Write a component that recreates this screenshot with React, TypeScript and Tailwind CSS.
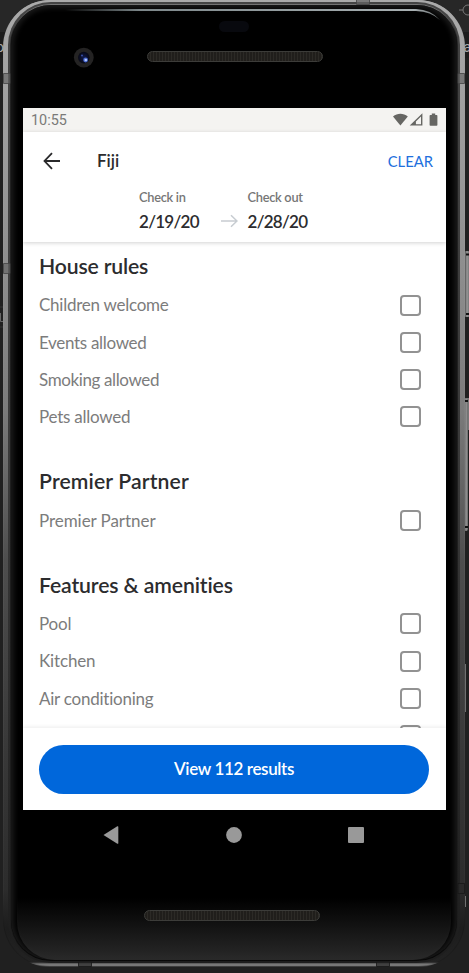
import React from "react";

const sections = [
  {
    title: "House rules",
    titleClass: "tracking-[-0.17px]",
    items: [
      ["Children welcome", "tracking-[-0.25px]"],
      ["Events allowed", "tracking-[-0.31px]"],
      ["Smoking allowed", "tracking-[-0.38px]"],
      ["Pets allowed", "tracking-[-0.24px]"],
    ],
  },
  {
    title: "Premier Partner",
    titleClass: "tracking-[0.13px]",
    items: [["Premier Partner", "tracking-[-0.06px]"]],
  },
  {
    title: "Features & amenities",
    titleClass: "tracking-[-0.12px]",
    items: [
      ["Pool", "tracking-[-0.2px]"],
      ["Kitchen", "tracking-[-0.15px]"],
      ["Air conditioning", "tracking-[-0.23px]"],
      ["", ""],
    ],
  },
];

function Speaker() {
  return (
    <div className="h-[11px] w-[176px] rounded-full border border-[#3c3c39] bg-[repeating-linear-gradient(90deg,#201e1b_0px,#201e1b_2px,#2c2a26_2px,#2c2a26_3px)]" />
  );
}

function StatusIcons() {
  return (
    <svg width="46" height="16" viewBox="0 0 46 16" fill="#666663">
      <path d="M0 4.4C4.4 1 10.4 1 14.8 4.4L7.4 13.4Z" />
      <path d="M16.7 13.5L29.4 1.2V13.5Z M22.9 12.2H28V4.6L22.9 9.5Z" fillRule="evenodd" />
      <path d="M38.8 1.6h3.4v1.3h1.4q.8 0 .8.8v9.2q0 .8-.8.8h-6.2q-.8 0-.8-.8V3.7q0-.8.8-.8h1.4z" />
    </svg>
  );
}

function StatusBar() {
  return (
    <div className="flex h-6 shrink-0 items-center justify-between bg-[#f4f3f1] pr-[7px] pl-2">
      <span className="pt-px font-[Roboto,sans-serif] text-[14.4px] text-[#7a7a78]">10:55</span>
      <StatusIcons />
    </div>
  );
}

function DateField({ label, value }: { label: string; value: string }) {
  return (
    <div className="w-[60px] whitespace-nowrap">
      <div className="h-[23px] text-[12.8px] leading-[18px] font-semibold tracking-[-0.27px] text-[#767676]">{label}</div>
      <div className="text-[17px] leading-[22px] font-semibold tracking-[-0.72px] text-[#2c2c2e]">{value}</div>
    </div>
  );
}

function Header() {
  return (
    <header className="relative z-10 h-[110px] shrink-0 bg-white shadow-[0_1px_4px_rgba(0,0,0,0.18)]">
      <div className="flex h-[56px] items-center pt-[2px] pr-[13px] pl-5">
        <svg width="17" height="18" viewBox="0 0 17 18" fill="none" stroke="#29292b" strokeWidth="1.8">
          <path d="M17 9H1.8M9 1.2L1.5 9L9 16.8" />
        </svg>
        <h1 className="ml-[37px] flex-1 text-[17px] font-semibold text-[#2c2c2e]">Fiji</h1>
        <button className="text-[14.8px] text-[#216fdd]">CLEAR</button>
      </div>
      <div className="flex pl-[116px]">
        <DateField label="Check in" value="2/19/20" />
        <svg className="mt-[26px] mr-[9.5px] ml-[22px]" width="17" height="14" viewBox="0 0 17 14" fill="none" stroke="#c7ccd1" strokeWidth="1.5">
          <path d="M0 7H16M10 1.2L16 7L10 12.8" />
        </svg>
        <DateField label="Check out" value="2/28/20" />
      </div>
    </header>
  );
}

function Filters() {
  return (
    <main className="min-h-0 flex-1 overflow-hidden pt-[5.5px] pr-[25px] pl-4">
      {sections.map((s) => (
        <section key={s.title} className="mb-[27.2px]">
          <h2 className={`flex h-[39px] items-center text-[21.2px] font-semibold text-[#2c2c2e] ${s.titleClass}`}>{s.title}</h2>
          {s.items.map(([item, tracking]) => (
            <label key={item} className={`flex h-[37.25px] items-center justify-between text-[17px] text-[#7c7c7c] ${tracking}`}>
              <span>{item}</span>
              <span className="size-[21px] rounded-[4px] border-2 border-[#929292]" />
            </label>
          ))}
        </section>
      ))}
    </main>
  );
}

function SystemNav() {
  return (
    <svg className="mt-[14px] ml-[80px]" width="264" height="22" viewBox="0 0 264 22" fill="#999">
      <path d="M.5 11L14.3 2.3Q15.3 1.8 15.3 3V19Q15.3 20.2 14.3 19.7Z" />
      <circle cx="131" cy="11" r="7.9" />
      <rect x="245" y="3" width="16" height="16" rx="1" />
    </svg>
  );
}

function Backdrop() {
  return (
    <div className="absolute inset-0 overflow-hidden bg-[#202020]">
      <div className="h-8 bg-[#272727]" />
      <div className="flex h-[26px] items-center justify-between bg-[#1d1d1d] pt-1 font-[Roboto,sans-serif] text-[14px] text-[#aaa]">
        <span className="-ml-[4px]">o</span>
        <span className="-mr-[2px]">a</span>
      </div>
      <svg className="absolute inset-0" width="469" height="973" viewBox="0 0 469 973" fill="none">
        <path d="M459 10H463" stroke="#777" />
        <circle cx="468" cy="10" r="5" stroke="#777" />
        <path d="M0 307H5M0 327H5" stroke="#343434" />
        <path d="M.5 313V321.5H3" stroke="#666" />
      </svg>
    </div>
  );
}

function SideKeys() {
  return (
    <svg className="absolute inset-0" width="469" height="973" viewBox="0 0 469 973">
      <defs>
        <linearGradient id="key">
          <stop stopColor="#333" />
          <stop offset=".5" stopColor="#999" />
          <stop offset="1" stopColor="#666" />
        </linearGradient>
      </defs>
      <rect x="464" y="251" width="6" height="66" rx="2" fill="url(#key)" />
      <rect x="467" y="398" width="2" height="32" fill="#777" />
      <rect x="464" y="398" width="4" height="133" rx="2" fill="url(#key)" />
      <path d="M466 254.5h3M466 314h3M465 401h3M465 527h3" stroke="#111" strokeWidth="2" />
      <path d="M465.5 664V712M465.5 896V907" stroke="#707070" />
    </svg>
  );
}

function FrameSeams() {
  return (
    <svg className="absolute inset-0" width="469" height="973" viewBox="0 0 469 973" fill="#666" fillOpacity=".7" stroke="#444" strokeOpacity=".8">
      <path d="M3.5 73.5H10V83.5H3.5ZM464.5 73.5H458V83.5H464.5ZM356.5 0V4.5H369.5V0M3.5 263.5H10V273.5H3.5Z" />
      <path d="M464.5 883.5H458V893.5H464.5ZM78.5 962V966.5H91.5V962ZM376.5 962V966.5H389.5V962Z" fill="#2a2a2a" stroke="#181818" />
    </svg>
  );
}

export default function App() {
  return (
    <div className="relative h-[973px] w-[469px] overflow-hidden font-[Lato,sans-serif] [font-variant-ligatures:none]">
      <Backdrop />
      <SideKeys />
      <div className="relative ml-[3px] h-[967px] w-[462px] rounded-[47px] bg-[linear-gradient(#a3a3a3_0%,#999_22%,#808080_42%,#555_58%,#3f3f3f_78%,#303030_92%,#191919_96%,#1d1d1d_99.5%,#6a6a6a_99.7%,#333_100%)] px-px pt-0 pb-px">
        <div className="h-full rounded-[46px] bg-[linear-gradient(#aaa_0%,#959595_22%,#7c7c7c_42%,#4e4e4e_58%,#383838_78%,#2c2c2c_92%,#1d1d1d_96%,#222_99.6%,#777_99.8%)] px-1 pt-[2px] pb-[3px]">
          <div className="h-full rounded-[43px] bg-[linear-gradient(#444,#393939_50%,#1d1d1d)] p-[2px]">
            <div className="h-full rounded-[41px] bg-[linear-gradient(#757575_0%,#222_3%,#1c1c1c_96%,#080808_100%)] p-px">
              <div className="relative h-full rounded-[40px] bg-black shadow-[inset_0_0_5px_3px_#191919]">
                <div className="absolute inset-x-1.5 bottom-0 h-[62px] rounded-b-[38px] bg-linear-to-b from-transparent to-[#292929]" />
              </div>
            </div>
          </div>
        </div>
      </div>
      <FrameSeams />
      <svg className="absolute inset-0" width="469" height="104" viewBox="0 0 469 104" fill="none">
        <defs>
          <linearGradient id="gloss" gradientUnits="userSpaceOnUse" x1="65" x2="440">
            <stop stopColor="#7d878a" stopOpacity="0" />
            <stop offset=".2" stopColor="#7d878a" />
            <stop offset=".93" stopColor="#a8b0b2" />
            <stop offset="1" stopColor="#a8b0b2" stopOpacity=".6" />
          </linearGradient>
          <radialGradient id="lens">
            <stop stopColor="#101a4d" />
            <stop offset="1" stopColor="#080914" />
          </radialGradient>
        </defs>
        <path d="M65 9H416Q431 9.5 440 20Q431 11.7 416 11H65Z" fill="url(#gloss)" />
        <rect x="219" y="21" width="30" height="11" rx="5.5" fill="#08090e" />
        <circle cx="83.8" cy="57.6" r="9.9" fill="#242323" />
        <circle cx="83.8" cy="57.6" r="5.8" fill="url(#lens)" />
        <circle cx="85.6" cy="60" r="2.4" fill="#4869cf" />
        <circle cx="85.8" cy="60" r="1.3" fill="#b5c9ff" />
        <circle cx="82" cy="55.5" r="1.1" fill="#34499d" />
      </svg>
      <div className="absolute inset-0 flex flex-col pl-[23px]">
        <div className="h-[108px] shrink-0 pt-[51px] pl-[124px]">
          <Speaker />
        </div>
        <div className="flex h-[702px] w-[423px] shrink-0 flex-col bg-white">
          <StatusBar />
          <Header />
          <Filters />
          <footer className="relative z-10 h-[82px] shrink-0 bg-white pt-[16.5px] pr-[17px] pl-4 shadow-[0_-1px_4px_rgba(0,0,0,0.08)]">
            <button className="h-[49px] w-full rounded-full bg-[#0067db] text-[17px] font-semibold tracking-[-0.36px] text-white">View 112 results</button>
          </footer>
        </div>
        <SystemNav />
        <div className="mt-[64px] ml-[121px]">
          <Speaker />
        </div>
      </div>
    </div>
  );
}
